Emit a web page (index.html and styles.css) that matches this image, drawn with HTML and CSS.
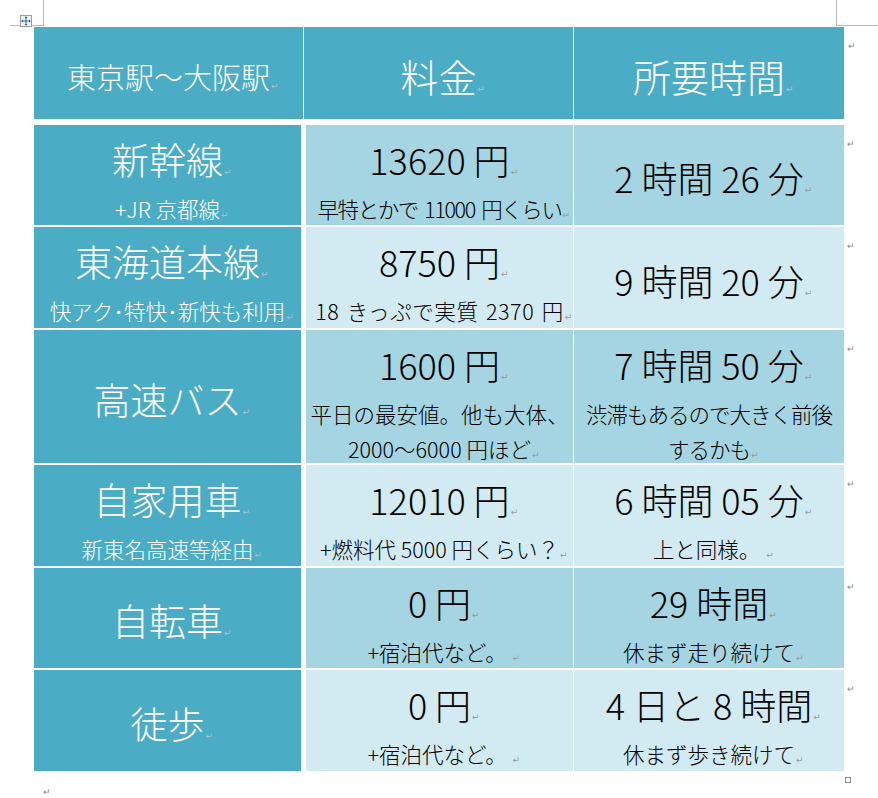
FILE: index.html
```html
<!DOCTYPE html>
<html lang="ja">
<head>
<meta charset="utf-8">
<title>東京駅～大阪駅</title>
<link rel="stylesheet" href="styles.css">
</head>
<body>
<div class="page">
  <div class="crop crop-tl-v"></div>
  <div class="crop crop-tl-h"></div>
  <div class="crop crop-tr-v"></div>
  <div class="crop crop-tr-h"></div>
  <div class="handle">
    <svg width="10" height="10" viewBox="0 0 10 10">
      <path d="M5 1 V9 M1 5 H9" stroke="#3b63b0" stroke-width="1" fill="none"/>
      <path d="M5 0 L3.5 2 H6.5 Z M5 10 L3.5 8 H6.5 Z M0 5 L2 3.5 V6.5 Z M10 5 L8 3.5 V6.5 Z" fill="#3b63b0"/>
    </svg>
  </div>

  <div class="table">
    <div class="row head">
      <div class="cell hc1"><span class="t">東京駅～大阪駅<span class="pm">↵</span></span></div>
      <div class="cell hc2"><span class="t">料金<span class="pm">↵</span></span></div>
      <div class="cell hc3"><span class="t">所要時間<span class="pm">↵</span></span></div>
      <span class="eor">↵</span>
    </div>

    <div class="row r1 band-a">
      <div class="cell c1"><div class="main">新幹線<span class="pm">↵</span></div><div class="sub">+JR 京都線<span class="pm">↵</span></div></div>
      <div class="cell c2"><div class="main">13620 円<span class="pm">↵</span></div><div class="sub tight">早特とかで 11000 円くらい<span class="pm">↵</span></div></div>
      <div class="cell c3 mid"><div class="main">2 時間 26 分<span class="pm">↵</span></div></div>
      <span class="eor">↵</span>
    </div>

    <div class="row r2 band-b">
      <div class="cell c1"><div class="main">東海道本線<span class="pm">↵</span></div><div class="sub">快アク･特快･新快も利用<span class="pm">↵</span></div></div>
      <div class="cell c2"><div class="main">8750 円<span class="pm">↵</span></div><div class="sub wide">18 きっぷで実質 2370 円<span class="pm">↵</span></div></div>
      <div class="cell c3 mid"><div class="main">9 時間 20 分<span class="pm">↵</span></div></div>
      <span class="eor">↵</span>
    </div>

    <div class="row r3 band-a">
      <div class="cell c1 mid"><div class="main">高速バス<span class="pm">↵</span></div></div>
      <div class="cell c2"><div class="main">1600 円<span class="pm">↵</span></div><div class="sub">平日の最安値。他も大体、<br>2000～6000 円ほど<span class="pm">↵</span></div></div>
      <div class="cell c3"><div class="main">7 時間 50 分<span class="pm">↵</span></div><div class="sub narrow">渋滞もあるので大きく前後<br>するかも<span class="pm">↵</span></div></div>
      <span class="eor">↵</span>
    </div>

    <div class="row r4 band-b">
      <div class="cell c1"><div class="main">自家用車<span class="pm">↵</span></div><div class="sub">新東名高速等経由<span class="pm">↵</span></div></div>
      <div class="cell c2"><div class="main">12010 円<span class="pm">↵</span></div><div class="sub">+燃料代 5000 円くらい？<span class="pm">↵</span></div></div>
      <div class="cell c3"><div class="main">6 時間 05 分<span class="pm">↵</span></div><div class="sub">上と同様。 <span class="pm">↵</span></div></div>
      <span class="eor">↵</span>
    </div>

    <div class="row r5 band-a">
      <div class="cell c1 mid"><div class="main">自転車<span class="pm">↵</span></div></div>
      <div class="cell c2"><div class="main">0 円<span class="pm">↵</span></div><div class="sub">+宿泊代など。 <span class="pm">↵</span></div></div>
      <div class="cell c3"><div class="main">29 時間<span class="pm">↵</span></div><div class="sub">休まず走り続けて<span class="pm">↵</span></div></div>
      <span class="eor">↵</span>
    </div>

    <div class="row r6 band-b">
      <div class="cell c1 mid"><div class="main">徒歩<span class="pm">↵</span></div></div>
      <div class="cell c2"><div class="main">0 円<span class="pm">↵</span></div><div class="sub">+宿泊代など。 <span class="pm">↵</span></div></div>
      <div class="cell c3"><div class="main">4 日と 8 時間<span class="pm">↵</span></div><div class="sub">休まず歩き続けて<span class="pm">↵</span></div></div>
      <span class="eor">↵</span>
    </div>
    <div class="resize"></div>
  </div>
  <p class="after">↵</p>
</div>
</body>
</html>
```

FILE: styles.css
```css
html, body {
  margin: 0;
  padding: 0;
  background: #ffffff;
}

body {
  font-family: "Noto Sans CJK JP", "Noto Sans", sans-serif;
  font-weight: 300;
}

.page {
  position: relative;
  width: 878px;
  height: 798px;
  padding: 27px 0 0 34px;
  box-sizing: border-box;
  overflow: hidden;
}

.crop {
  position: absolute;
  background: #b9b9b9;
}
.crop-tl-v { left: 43px; top: 0; width: 1px; height: 26px; }
.crop-tl-h { left: 10px; top: 25px; width: 34px; height: 1px; }
.crop-tr-v { left: 836px; top: 0; width: 1px; height: 26px; }
.crop-tr-h { left: 836px; top: 25px; width: 42px; height: 1px; }

.handle {
  position: absolute;
  left: 20px;
  top: 15px;
  width: 10px;
  height: 10px;
  border: 1px solid #9c9c9c;
  background: #f4f6fa;
  display: flex;
  align-items: center;
  justify-content: center;
}
.handle svg { display: block; }

.table {
  position: relative;
  width: 830px;
}

.row {
  display: flex;
  align-items: stretch;
}

.head {
  height: 92px;
  gap: 1px;
  margin-bottom: 6px;
}
.r1, .r5 { height: 100px; }
.r2, .r4, .r6 { height: 101px; }
.r3 { height: 133px; }
.r1, .r2, .r3, .r4, .r5 { margin-bottom: 2px; }

.cell {
  box-sizing: border-box;
  display: flex;
  flex-direction: column;
  align-items: center;
  text-align: center;
  padding: 2px 6px 0;
  white-space: nowrap;
}

.head .cell {
  background: #4bacc6;
  color: #ffffff;
  justify-content: center;
  padding-top: 5px;
}
.hc1 { width: 269px; font-size: 29px; }
.hc2 { width: 269px; font-size: 38px; }
.hc3 { width: 270px; font-size: 38px; }
.head .t { line-height: 44px; }

.c1 {
  width: 267px;
  background: #4bacc6;
  color: #ffffff;
}
.c2 {
  width: 267px;
  margin-left: 5px;
  margin-right: 1px;
  color: #000000;
}
.c3 {
  width: 270px;
  color: #000000;
}
.band-a .c2, .band-a .c3 { background: #a5d5e2; }
.band-b .c2, .band-b .c3 { background: #d2eaf1; }

.main {
  font-size: 36px;
  line-height: 64px;
}
.c1 .main { font-size: 37px; }
.sub {
  font-size: 21.5px;
  line-height: 35px;
}
.sub.tight { letter-spacing: -1.4px; word-spacing: 3px; }
.sub.wide { letter-spacing: 0.6px; word-spacing: 2px; }
.sub.narrow { letter-spacing: -1px; }

.cell.mid {
  justify-content: center;
  padding-top: 4px;
}
.cell.mid .main {
  line-height: 50px;
}

.pm {
  display: inline-block;
  width: 0;
  font-family: "DejaVu Sans", sans-serif;
  font-size: 9px;
  font-weight: 400;
  line-height: 1;
  letter-spacing: 0;
  color: #9a9a9a;
  text-indent: 1px;
}
.c1 .pm, .head .pm { color: #a9c3cb; }

.eor {
  margin-left: 3px;
  padding-top: 13px;
  font-family: "DejaVu Sans", sans-serif;
  font-size: 9px;
  line-height: 12px;
  color: #8a8a8a;
}

.resize {
  position: absolute;
  left: 811px;
  top: 750px;
  width: 4px;
  height: 4px;
  border: 1px solid #8a8a8a;
  background: #ffffff;
}

.after {
  margin: 16px 0 0 9px;
  font-family: "DejaVu Sans", sans-serif;
  font-size: 9px;
  line-height: 10px;
  color: #8a8a8a;
}
```
